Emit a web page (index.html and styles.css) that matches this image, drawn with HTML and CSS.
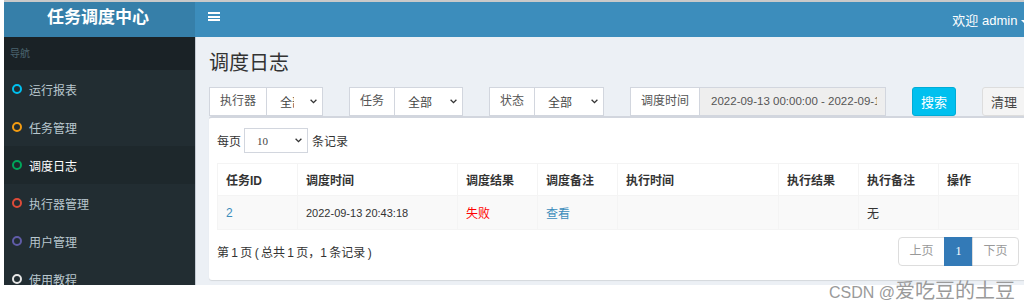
FILE: index.html
```html
<!DOCTYPE html>
<html lang="zh-CN">
  <head>
    <meta charset="UTF-8" />
    <meta name="viewport" content="width=device-width, initial-scale=1.0" />
    <title>任务调度中心</title>
    <link rel="stylesheet" href="styles.css">
  </head>

  <body>
    <div class="screen">
      <header class="topbar">
        <div class="logo">任务调度中心</div>
        <nav class="navbar">
          <span class="toggle"><i></i><i></i><i></i></span>
          <span class="user">欢迎 admin <b class="caret"></b></span>
        </nav>
      </header>

      <div class="main-row">
        <aside class="sidebar">
          <div class="nav-header">导航</div>
          <ul class="menu">
            <li><span class="dot aqua"></span>运行报表</li>
            <li><span class="dot orange"></span>任务管理</li>
            <li class="active"><span class="dot green"></span>调度日志</li>
            <li><span class="dot red"></span>执行器管理</li>
            <li><span class="dot purple"></span>用户管理</li>
            <li><span class="dot white"></span>使用教程</li>
          </ul>
        </aside>

        <main class="content">
          <h1>调度日志</h1>

          <div class="filters">
            <div class="group">
              <span class="addon">执行器</span>
              <span class="select w56"><span class="val clip">全部</span>
                <svg class="chev" width="7" height="5" viewBox="0 0 7 5"><polyline points="0.6,0.8 3.5,3.7 6.4,0.8" /></svg>
              </span>
            </div>
            <div class="group">
              <span class="addon">任务</span>
              <span class="select w68"><span class="val">全部</span>
                <svg class="chev" width="7" height="5" viewBox="0 0 7 5"><polyline points="0.6,0.8 3.5,3.7 6.4,0.8" /></svg>
              </span>
            </div>
            <div class="group">
              <span class="addon">状态</span>
              <span class="select w69"><span class="val">全部</span>
                <svg class="chev" width="7" height="5" viewBox="0 0 7 5"><polyline points="0.6,0.8 3.5,3.7 6.4,0.8" /></svg>
              </span>
            </div>
            <div class="group">
              <span class="addon">调度时间</span>
              <span class="date-input"><span class="date-text">2022-09-13 00:00:00 - 2022-09-13</span></span>
            </div>
            <button class="btn btn-info">搜索</button>
            <button class="btn btn-default">清理</button>
          </div>

          <div class="box">
            <div class="length">
              <span>每页</span>
              <span class="select small"><span class="val num">10</span>
                <svg class="chev" width="7" height="5" viewBox="0 0 7 5"><polyline points="0.6,0.8 3.5,3.7 6.4,0.8" /></svg>
              </span>
              <span>条记录</span>
            </div>

            <table class="log-table">
              <colgroup>
                <col style="width: 80px" />
                <col style="width: 160px" />
                <col style="width: 80px" />
                <col style="width: 80px" />
                <col style="width: 161px" />
                <col style="width: 80px" />
                <col style="width: 80px" />
                <col style="width: 80px" />
              </colgroup>
              <thead>
                <tr>
                  <th>任务ID</th>
                  <th>调度时间</th>
                  <th>调度结果</th>
                  <th>调度备注</th>
                  <th>执行时间</th>
                  <th>执行结果</th>
                  <th>执行备注</th>
                  <th>操作</th>
                </tr>
              </thead>
              <tbody>
                <tr>
                  <td class="link">2</td>
                  <td class="digits">2022-09-13 20:43:18</td>
                  <td class="fail">失败</td>
                  <td class="link">查看</td>
                  <td></td>
                  <td></td>
                  <td>无</td>
                  <td></td>
                </tr>
              </tbody>
            </table>

            <div class="pager-row">
              <span class="info">第 1 页 ( 总共 1 页，1 条记录 )</span>
              <ul class="pagination">
                <li class="disabled">上页</li>
                <li class="current">1</li>
                <li class="disabled">下页</li>
              </ul>
            </div>
          </div>
        </main>
      </div>
    </div>

    <div class="watermark"><span class="latin">CSDN @</span>爱吃豆的土豆</div>
  </body>
</html>
```

FILE: styles.css
```css
body {
  margin: 0;
  background-color: #ffffff;
  font-family: "Liberation Sans", "Noto Sans CJK SC", sans-serif;
  font-size: 12px;
  color: #333;
}

.screen {
  margin-left: 4px;
  width: 1020px;
  height: 283px;
  border-top: 2px solid #c9c9c9;
  overflow: hidden;
  display: flex;
  flex-direction: column;
}

/* header */
.topbar {
  display: flex;
  height: 35px;
  flex-shrink: 0;
}

.logo {
  width: 191px;
  background-color: #367fa9;
  color: #fff;
  font-size: 17px;
  font-weight: bold;
  text-align: center;
  line-height: 31px;
  padding-right: 3px;
  box-sizing: border-box;
}

.navbar {
  flex: 1;
  background-color: #3c8dbc;
  display: flex;
  align-items: flex-start;
  padding-left: 13px;
}

.toggle {
  margin-top: 10px;
  display: flex;
  flex-direction: column;
  gap: 1.5px;
}

.toggle i {
  display: block;
  width: 12px;
  height: 2px;
  background-color: #fff;
}

.user {
  margin-left: auto;
  margin-right: -5px;
  margin-top: 8px;
  color: #fff;
  font-size: 13px;
  white-space: nowrap;
}

.caret {
  display: inline-block;
  width: 0;
  height: 0;
  border-top: 4px solid #fff;
  border-left: 4px solid transparent;
  border-right: 4px solid transparent;
  vertical-align: middle;
}

/* sidebar */
.main-row {
  display: flex;
  flex: 1;
  min-height: 0;
}

.sidebar {
  width: 191px;
  flex-shrink: 0;
  background-color: #222d32;
}

.nav-header {
  height: 33px;
  line-height: 33px;
  background-color: #1a2226;
  color: #4b646f;
  font-size: 10px;
  padding-left: 6px;
}

.menu {
  list-style: none;
  margin: 0;
  padding: 0;
}

.menu li {
  height: 38px;
  display: flex;
  align-items: center;
  gap: 7px;
  padding-left: 8px;
  color: #b8c7ce;
  font-size: 12px;
}

.menu li.active {
  background-color: #1e282c;
  color: #fff;
}

.dot {
  width: 6px;
  height: 6px;
  border: 2px solid;
  border-radius: 50%;
}

.dot.aqua { border-color: #00c0ef; }
.dot.orange { border-color: #f39c12; }
.dot.green { border-color: #00a65a; }
.dot.red { border-color: #dd4b39; }
.dot.purple { border-color: #605ca8; }
.dot.white { border-color: #e6e6e6; }

/* content */
.content {
  flex: 1;
  min-width: 0;
  background-color: #ecf0f5;
  border-left: 1px solid #c4cad3;
  padding: 14px 0 0 13px;
  overflow: hidden;
}

.content h1 {
  margin: 0;
  font-size: 20px;
  font-weight: normal;
  line-height: 24px;
  color: #333;
}

.filters {
  margin-top: 12px;
  display: flex;
  gap: 26px;
  height: 29px;
  white-space: nowrap;
}

.group {
  display: flex;
  flex-shrink: 0;
  height: 29px;
}

.addon {
  padding: 0 10px;
  border: 1px solid #d2d6de;
  background-color: #fff;
  color: #555;
  line-height: 27px;
}

.select {
  display: flex;
  align-items: center;
  justify-content: space-between;
  box-sizing: border-box;
  padding: 0 5px 0 13px;
  border: 1px solid #d2d6de;
  border-left: none;
  background-color: #fff;
  color: #444;
}

.select.w56 { width: 56px; }
.select.w68 { width: 68px; }
.select.w69 { width: 69px; }

.val.clip {
  width: 14px;
  overflow: hidden;
}

.chev {
  flex-shrink: 0;
}

.chev polyline {
  fill: none;
  stroke: #333;
  stroke-width: 1.3;
}

.date-input {
  width: 186px;
  box-sizing: border-box;
  padding-left: 11px;
  border: 1px solid #d2d6de;
  border-left: none;
  background-color: #eee;
  color: #555;
  line-height: 27px;
  overflow: hidden;
}

.date-text {
  display: block;
  width: 166px;
  overflow: hidden;
  font-size: 11.5px;
}

.btn {
  flex-shrink: 0;
  width: 44px;
  height: 29px;
  padding: 0;
  border-radius: 3px;
  border: 1px solid;
  font-family: inherit;
  font-size: 13px;
}

.btn-info {
  background-color: #00c0ef;
  border-color: #00acd6;
  color: #fff;
}

.btn-default {
  background-color: #f4f4f4;
  border-color: #ddd;
  color: #444;
}

/* box */
.box {
  width: 818px;
  box-sizing: border-box;
  background-color: #fff;
  border-top: 2px solid #d2d6de;
  border-radius: 3px;
  box-shadow: 0 1px 1px rgba(0, 0, 0, 0.1);
  padding: 10px 8px 14px;
}

.length {
  display: flex;
  align-items: center;
  gap: 3px;
  height: 25px;
}

.select.small {
  width: 64px;
  height: 25px;
  border-left: 1px solid #d2d6de;
  padding-left: 12px;
  padding-right: 5px;
  margin-right: 1px;
}

.num {
  font-family: "Liberation Serif", serif;
  font-size: 11px;
}

.log-table {
  margin-top: 10px;
  width: 801px;
  table-layout: fixed;
  border-collapse: collapse;
  border: 1px solid #f4f4f4;
}

.log-table th,
.log-table td {
  border: 1px solid #f4f4f4;
  padding: 0 8px;
  text-align: left;
  white-space: nowrap;
}

.log-table th {
  height: 31px;
  font-weight: bold;
  color: #333;
}

.log-table td {
  height: 33px;
  background-color: #f9f9f9;
}

.log-table td.digits {
  font-size: 11px;
}

.log-table td.link {
  color: #3c8dbc;
}

.log-table td.fail {
  color: #f00;
}

.pager-row {
  margin-top: 7px;
  display: flex;
  justify-content: space-between;
  align-items: center;
  height: 29px;
}

.info {
  word-spacing: -1px;
}

.pagination {
  list-style: none;
  margin: 0;
  padding: 0;
  display: flex;
}

.pagination li {
  height: 29px;
  box-sizing: border-box;
  border: 1px solid #ddd;
  margin-left: -1px;
  line-height: 27px;
  text-align: center;
  color: #999;
}

.pagination li.disabled {
  width: 47px;
}

.pagination li:first-child {
  border-radius: 4px 0 0 4px;
}

.pagination li:last-child {
  border-radius: 0 4px 4px 0;
}

.pagination li.current {
  width: 29px;
  background-color: #337ab7;
  border-color: #337ab7;
  color: #fff;
  font-family: "Liberation Serif", serif;
}

.watermark {
  position: absolute;
  left: 829px;
  top: 275px;
  font-size: 20px;
  color: #9a9a9a;
  white-space: nowrap;
}

.watermark .latin {
  font-size: 16px;
}
```
